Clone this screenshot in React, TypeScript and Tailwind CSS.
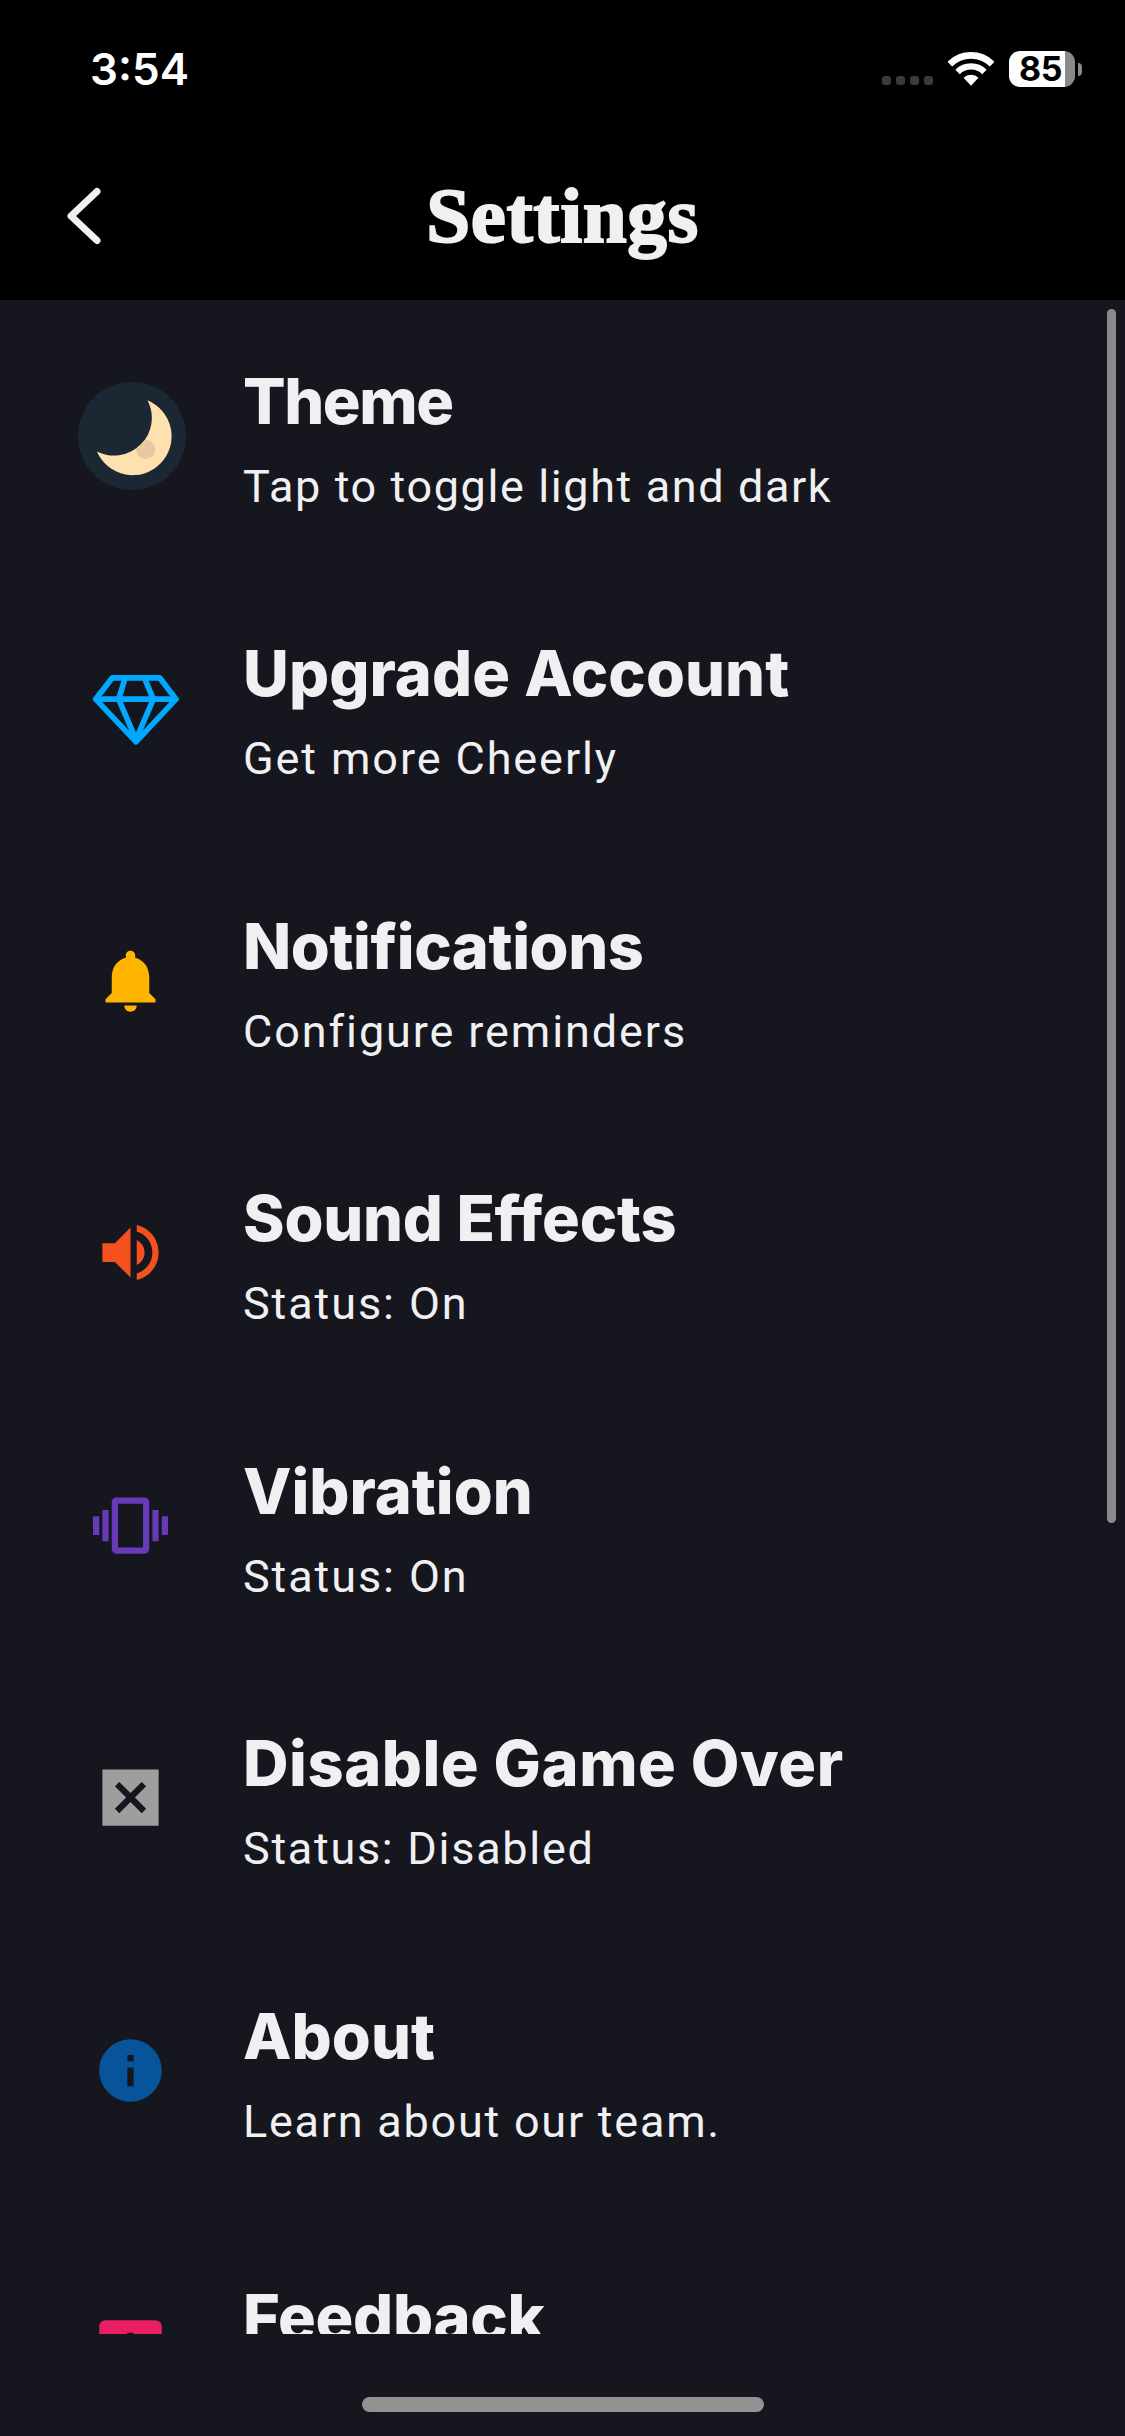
import type { ReactNode } from 'react';

function MoonIcon() {
  const crescent = 'M262 121A117 117 0 1 1 110 275A113.5 113.5 0 0 0 262 121Z';
  return (
    <svg className="size-[108px]" viewBox="53 66 325 325">
      <defs>
        <clipPath id="crescent">
          <path d={crescent} />
        </clipPath>
      </defs>
      <circle cx="215.5" cy="228.5" r="162.5" fill="#1b2733" />
      <path d={crescent} fill="#ffe1b0" />
      <circle cx="257" cy="269" r="29" fill="#e6c9a3" clipPath="url(#crescent)" />
    </svg>
  );
}

function GemIcon() {
  return (
    <svg
      className="ml-2 mt-[3px] h-[70px] w-[86px]"
      viewBox="99 947 258 209"
      fill="none"
      stroke="#00a8ff"
      strokeWidth="17"
      strokeLinejoin="round"
    >
      <path d="M157 955H299L348 1019L228 1147L107 1019Z" />
      <path d="M107 1019H348M195 957L176 1019L228 1140L280 1019L254 957" />
    </svg>
  );
}

function Glyph({ d, color }: { d: string; color: string }) {
  return (
    <svg className="mb-[2px] mr-[3px] size-[75px]" viewBox="0 0 24 24" fill={color}>
      <path d={d} />
    </svg>
  );
}

type Row = {
  title: string;
  sub: string;
  icon: ReactNode;
  titleSpacing: string;
  subSpacing: string;
  tall?: boolean;
};

const rows: Row[] = [
  {
    title: 'Theme',
    sub: 'Tap to toggle light and dark',
    icon: <MoonIcon />,
    titleSpacing: 'tracking-[-1.4px]',
    subSpacing: 'tracking-[1.6px]',
  },
  {
    title: 'Upgrade Account',
    sub: 'Get more Cheerly',
    icon: <GemIcon />,
    titleSpacing: 'tracking-[0.1px]',
    subSpacing: 'tracking-[1.9px]',
  },
  {
    title: 'Notifications',
    sub: 'Configure reminders',
    icon: (
      <Glyph
        color="#ffb400"
        d="M12 22c1.1 0 2-.9 2-2h-4c0 1.1.89 2 2 2zm6-6v-5c0-3.07-1.64-5.64-4.5-6.32V4c0-.83-.67-1.5-1.5-1.5s-1.5.67-1.5 1.5v.68C7.63 5.36 6 7.92 6 11v5l-2 2v1h16v-1l-2-2z"
      />
    ),
    titleSpacing: 'tracking-[-0.4px]',
    subSpacing: 'tracking-[1.9px]',
  },
  {
    title: 'Sound Effects',
    sub: 'Status: On',
    icon: (
      <Glyph
        color="#f4511e"
        d="M3 9v6h4l5 5V4L7 9H3zm13.5 3c0-1.77-1.02-3.29-2.5-4.03v8.05c1.48-.73 2.5-2.25 2.5-4.02zM14 3.23v2.06c2.89.86 5 3.54 5 6.71s-2.11 5.85-5 6.71v2.06c4.01-.91 7-4.49 7-8.77s-2.99-7.86-7-8.77z"
      />
    ),
    titleSpacing: 'tracking-[-0.2px]',
    subSpacing: 'tracking-[1.9px]',
  },
  {
    title: 'Vibration',
    sub: 'Status: On',
    icon: (
      <Glyph
        color="#673ab7"
        d="M0 15h2V9H0v6zm3 2h2V7H3v10zm19-8v6h2V9h-2zm-3 8h2V7h-2v10zM16.5 3h-9C6.67 3 6 3.67 6 4.5v15c0 .83.67 1.5 1.5 1.5h9c.83 0 1.5-.67 1.5-1.5v-15c0-.83-.67-1.5-1.5-1.5zM16 19H8V5h8v14z"
      />
    ),
    titleSpacing: 'tracking-[0px]',
    subSpacing: 'tracking-[1.9px]',
  },
  {
    title: 'Disable Game Over',
    sub: 'Status: Disabled',
    icon: (
      <Glyph
        color="#9e9e9e"
        d="M3 3v18h18V3H3zm14 12.59L15.59 17 12 13.41 8.41 17 7 15.59 10.59 12 7 8.41 8.41 7 12 10.59 15.59 7 17 8.41 13.41 12 17 15.59z"
      />
    ),
    titleSpacing: 'tracking-[0.55px]',
    subSpacing: 'tracking-[1.7px]',
  },
  {
    title: 'About',
    sub: 'Learn about our team.',
    icon: (
      <Glyph
        color="#07549a"
        d="M12 2C6.48 2 2 6.48 2 12s4.48 10 10 10 10-4.48 10-10S17.52 2 12 2zm1 15h-2v-6h2v6zm0-8h-2V7h2v2z"
      />
    ),
    titleSpacing: 'tracking-[0.1px]',
    subSpacing: 'tracking-[1.75px]',
  },
  {
    title: 'Feedback',
    sub: '',
    icon: (
      <Glyph
        color="#e91e63"
        d="M20 2H4c-1.1 0-1.99.9-1.99 2L2 22l4-4h14c1.1 0 2-.9 2-2V4c0-1.1-.9-2-2-2zm-7 12h-2v-2h2v2zm0-4h-2V6h2v4z"
      />
    ),
    titleSpacing: 'tracking-[-0.3px]',
    subSpacing: 'tracking-[1.7px]',
    tall: true,
  },
];

function StatusBar() {
  return (
    <div className="flex h-[132px] shrink-0 justify-between pl-[90px] pr-[43px] font-['Inter',sans-serif] text-white">
      <span className="mt-[41px] h-[56px] text-[44px] font-semibold leading-[56px]">3:54</span>
      <div className="mt-[51px] flex h-9 items-center">
        <div className="mr-[15px] flex gap-[5px] self-end pb-[2px]">
          <i className="size-[9px] rounded-[3px] bg-[#3b3b3b]" />
          <i className="size-[9px] rounded-[3px] bg-[#3b3b3b]" />
          <i className="size-[9px] rounded-[3px] bg-[#3b3b3b]" />
          <i className="size-[9px] rounded-[3px] bg-[#3b3b3b]" />
        </div>
        <svg className="mr-[15px] h-[34px] w-[46px]" viewBox="324 65 138 102">
          <g fill="none" stroke="#fff">
            <path d="M329.4 101.4A90 90 0 0 1 456.6 101.4" strokeWidth="20" />
            <path d="M352.7 124.7A57 57 0 0 1 433.3 124.7" strokeWidth="19" />
          </g>
          <path d="M393 166L370.5 142.5A32 32 0 0 1 415.5 142.5Z" fill="#fff" />
        </svg>
        <div className="flex h-9 w-[66px] items-center rounded-[11px] bg-[linear-gradient(to_right,#fff_56px,#8a8a8a_56px)]">
          <span className="ml-[10px] text-[34px] font-bold leading-[42px] tracking-[-0.3px] text-black">85</span>
        </div>
        <i className="ml-[3px] h-[13px] w-[4px] rounded-r-full bg-[#8a8a8a]" />
      </div>
    </div>
  );
}

export default function App() {
  return (
    <div className="flex h-[2436px] w-[1125px] flex-col overflow-hidden bg-[#15161e]">
      <header className="flex h-[300px] shrink-0 flex-col bg-black">
        <StatusBar />
        <div className="grid h-[168px] grid-cols-[1fr_auto_1fr] items-center">
          <svg
            className="ml-[64px] h-[60px] w-[40px]"
            viewBox="0 0 40 60"
            fill="none"
            stroke="#f0f0f2"
            strokeWidth="7"
            strokeLinecap="round"
            strokeLinejoin="round"
          >
            <path d="M33 5.5L7 30L33 54.5" />
          </svg>
          <h1 className="font-['Liberation_Serif',serif] text-[79px] font-bold leading-[90px] tracking-[0.6px] text-[#f0f0f2] [-webkit-text-stroke:2px_#f0f0f2]">
            Settings
          </h1>
        </div>
      </header>
      <main className="relative h-[2034px] shrink-0 overflow-hidden text-[#f0f0f3]">
        {rows.map((r) => (
          <section
            key={r.title}
            className={`flex items-center pl-[78px] ${r.tall ? 'h-[289px]' : 'h-[272.5px]'}`}
          >
            <div className="flex w-[108px] justify-center">{r.icon}</div>
            <div className="ml-[57px] flex flex-col gap-[21px] pt-[3px]">
              <h2
                className={`whitespace-nowrap font-['Inter',sans-serif] text-[63px] font-extrabold leading-[77px] [font-variant-ligatures:none] ${r.titleSpacing}`}
              >
                {r.title}
              </h2>
              <p
                className={`h-[52px] whitespace-nowrap font-['Roboto',sans-serif] text-[45px] leading-[52px] ${r.subSpacing}`}
              >
                {r.sub}
              </p>
            </div>
          </section>
        ))}
        <div className="absolute right-[9px] top-[9px] h-[1214px] w-[9px] rounded-full bg-[#8a8a8e]" />
      </main>
      <footer className="flex flex-1 justify-center pt-[63px]">
        <div className="h-[15px] w-[402px] rounded-full bg-[#929292]" />
      </footer>
    </div>
  );
}
